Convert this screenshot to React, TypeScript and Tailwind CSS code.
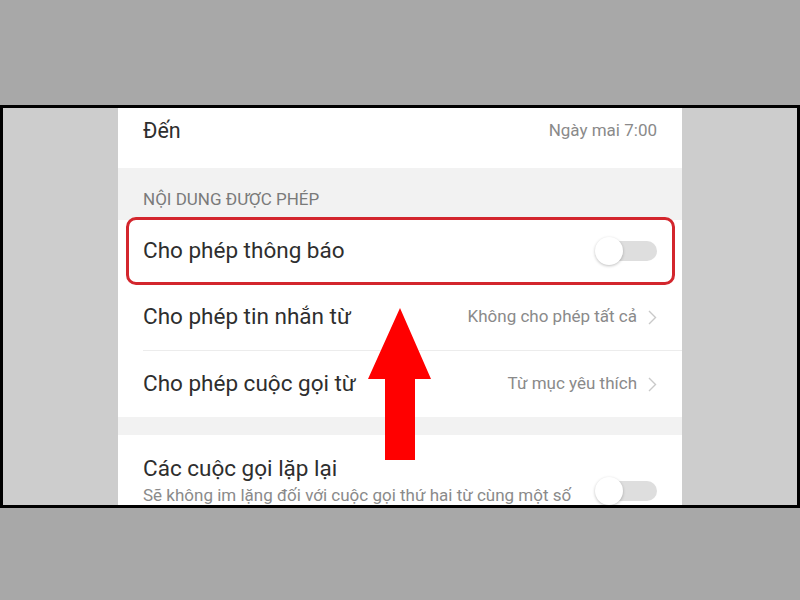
import React from "react";

function Toggle() {
  return (
    <div className="relative h-[28px] w-[62px] shrink-0">
      <div className="absolute right-0 top-[4px] h-[20px] w-[57px] rounded-full bg-[#dedede]" />
      <div className="absolute left-0 top-0 h-[28px] w-[28px] rounded-full bg-white shadow-[0_1px_3px_rgba(0,0,0,0.25)]" />
    </div>
  );
}

function Chevron() {
  return (
    <svg width="9" height="15" viewBox="0 0 9 15" className="ml-[11px] shrink-0">
      <path d="M1 1 L7.5 7.5 L1 14" fill="none" stroke="#c9c9c9" strokeWidth="1.4" />
    </svg>
  );
}

export default function App() {
  return (
    <div
      className="flex h-[600px] w-[800px] flex-col bg-[#a8a8a8]"
      style={{ fontFamily: "Roboto, 'Noto Sans', sans-serif" }}
    >
      <div className="h-[105px] shrink-0" />
      <div className="flex h-[403px] shrink-0 border-[3px] border-black bg-[#cdcdcd]">
        <div className="w-[115px] shrink-0" />

        {/* phone screen */}
        <div className="relative w-[564px] shrink-0 overflow-hidden bg-white">
          <div className="flex h-[60px] items-start justify-between px-[25px] pt-[9px]">
            <div className="flex h-[28px] items-center text-[21.5px] text-[#2e2e2e]">Đến</div>
            <div className="flex h-[28px] items-center text-[17px] text-[#8a8a8a]">Ngày mai 7:00</div>
          </div>

          <div className="h-[52px] bg-[#f2f2f2] px-[25px] pt-[21px] text-[17px] leading-[20px] text-[#7a7a7a]">
            NỘI DUNG ĐƯỢC PHÉP
          </div>

          <div className="relative flex h-[64px] items-center justify-between px-[25px] pb-[3px]">
            <span className="text-[22.5px] text-[#2e2e2e]">Cho phép thông báo</span>
            <Toggle />
            <div className="pointer-events-none absolute bottom-[-1px] left-[8px] right-[7px] top-[-3px] rounded-[10px] border-[3px] border-[#d3262d]" />
          </div>

          <div className="flex h-[66px] items-center justify-between pl-[25px] pr-[25px]">
            <span className="text-[22.5px] text-[#2e2e2e]">Cho phép tin nhắn từ</span>
            <div className="flex items-center">
              <span className="text-[17px] text-[#8a8a8a]">Không cho phép tất cả</span>
              <Chevron />
            </div>
          </div>
          <div className="ml-[25px] h-px bg-[#ececec]" />
          <div className="flex h-[66px] items-center justify-between px-[25px]">
            <span className="text-[22.5px] text-[#2e2e2e]">Cho phép cuộc gọi từ</span>
            <div className="flex items-center">
              <span className="text-[17px] text-[#8a8a8a]">Từ mục yêu thích</span>
              <Chevron />
            </div>
          </div>

          <div className="h-[18px] bg-[#f2f2f2]" />

          <div className="flex items-start justify-between px-[25px] pt-[19px]">
            <div className="flex flex-col">
              <span className="text-[22.5px] leading-[28px] text-[#2e2e2e]">Các cuộc gọi lặp lại</span>
              <span className="mt-[2px] text-[17px] leading-[22px] text-[#8a8a8a]">
                Sẽ không im lặng đối với cuộc gọi thứ hai từ cùng một số
              </span>
            </div>
            <div className="mt-[23px]">
              <Toggle />
            </div>
          </div>

          {/* annotation arrow */}
          <svg
            width="63"
            height="152"
            viewBox="0 0 63 152"
            className="absolute left-[250px] top-[200px]"
          >
            <polygon points="32,0 63,71 47,71 47,152 17,152 17,71 0,71" fill="#ff0000" />
          </svg>
        </div>

        <div className="flex-1" />
      </div>
      <div className="flex-1" />
    </div>
  );
}
